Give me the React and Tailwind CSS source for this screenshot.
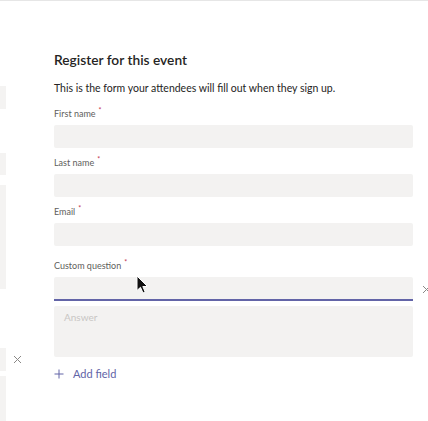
import React from "react";

function Field({ label, mt, h = "h-[23px]", focused = false }) {
  return (
    <div className={mt}>
      <div className="text-[9px] leading-[12px] text-[#605e5c]">
        {label}
        <span className="text-[#c4314b] relative -top-[4px] ml-[3px] text-[7px]">*</span>
      </div>
      <div className="mt-[5px] flex items-center">
        <div
          className={`w-[359px] shrink-0 bg-[#f3f2f1] rounded-[2px] ${h} ${
            focused ? "border-b-2 border-[#6264a7] rounded-b-none" : ""
          }`}
        />
        {focused && (
          <svg className="ml-[9px] shrink-0" width="9" height="9" viewBox="0 0 9 9">
            <path d="M1 1L8 8M8 1L1 8" stroke="#8a8886" strokeWidth="1" />
          </svg>
        )}
      </div>
    </div>
  );
}

export default function App() {
  return (
    <div
      className="relative w-[428px] h-[421px] overflow-hidden bg-white border-t border-[#e6e6e6] flex"
      style={{ fontFamily: 'Lato, "Open Sans", sans-serif' }}
    >
      <div className="w-[54px] shrink-0 flex flex-col">
        <div className="mt-[85px] h-[23px] w-[6px] bg-[#f4f3f2]" />
        <div className="mt-[44px] h-[22px] w-[6px] bg-[#f4f3f2]" />
        <div className="mt-[10px] h-[104px] w-[6px] bg-[#f4f3f2]" />
        <div className="mt-[59px] flex items-center">
          <div className="h-[23px] w-[6px] bg-[#f4f3f2]" />
          <svg className="ml-[7px]" width="9" height="9" viewBox="0 0 9 9">
            <path d="M1 1L8 8M8 1L1 8" stroke="#8a8886" strokeWidth="1" />
          </svg>
        </div>
        <div className="mt-[5px] flex-1 w-[6px] bg-[#f4f3f2]" />
      </div>

      <div className="flex flex-col">
        <div className="mt-[49px] text-[13.75px] leading-[20px] font-semibold text-[#252423]">
          Register for this event
        </div>
        <div className="mt-[11px] text-[10.5px] leading-[15px] text-[#252423]">
          This is the form your attendees will fill out when they sign up.
        </div>
        <Field label="First name" mt="mt-[12px]" />
        <Field label="Last name" mt="mt-[9px]" />
        <Field label="Email" mt="mt-[9px]" />
        <Field label="Custom question" mt="mt-[14px]" h="h-[24px]" focused />
        <div className="mt-[5px] w-[359px] h-[51px] bg-[#f3f2f1] rounded-[2px] px-[10px] pt-[5px] text-[10px] leading-[13px] text-[#c8c6c4]">
          Answer
        </div>
        <div className="mt-[9px] flex items-center text-[11px] leading-[15px] text-[#6264a7]">
          <svg width="10" height="10" viewBox="0 0 10 10">
            <path d="M5 0.5V9.5M0.5 5H9.5" stroke="#6264a7" strokeWidth="1" />
          </svg>
          <span className="ml-[9px]">Add field</span>
        </div>
      </div>

      <svg
        className="absolute left-[136px] top-[274px]"
        width="13"
        height="19"
        viewBox="0 0 13 19"
      >
        <path
          d="M1 1L1 15.5L4.5 12.3L7 18L9.2 17L6.8 11.5L11.5 11.5Z"
          fill="#111"
          stroke="#fff"
          strokeWidth="1"
          strokeLinejoin="round"
        />
      </svg>
    </div>
  );
}
